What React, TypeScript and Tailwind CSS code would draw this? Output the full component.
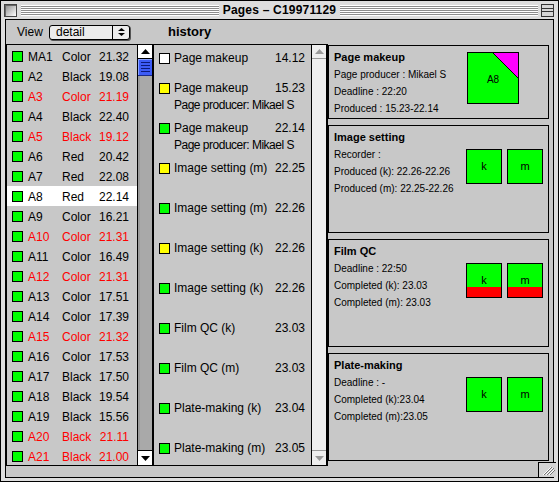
import React from "react";

type Page = { name: string; kind: string; time: string; late?: boolean; selected?: boolean };

const pages: Page[] = [
  { name: "MA1", kind: "Color", time: "21.32" },
  { name: "A2", kind: "Black", time: "19.08" },
  { name: "A3", kind: "Color", time: "21.19", late: true },
  { name: "A4", kind: "Black", time: "22.40" },
  { name: "A5", kind: "Black", time: "19.12", late: true },
  { name: "A6", kind: "Red", time: "20.42" },
  { name: "A7", kind: "Red", time: "22.08" },
  { name: "A8", kind: "Red", time: "22.14", selected: true },
  { name: "A9", kind: "Color", time: "16.21" },
  { name: "A10", kind: "Color", time: "21.31", late: true },
  { name: "A11", kind: "Color", time: "16.49" },
  { name: "A12", kind: "Color", time: "21.31", late: true },
  { name: "A13", kind: "Color", time: "17.51" },
  { name: "A14", kind: "Color", time: "17.39" },
  { name: "A15", kind: "Color", time: "21.32", late: true },
  { name: "A16", kind: "Color", time: "17.53" },
  { name: "A17", kind: "Black", time: "17.50" },
  { name: "A18", kind: "Black", time: "19.54" },
  { name: "A19", kind: "Black", time: "15.56" },
  { name: "A20", kind: "Black", time: "21.11", late: true },
  { name: "A21", kind: "Black", time: "21.00", late: true },
];

type Step = { status: "done" | "busy" | "new"; label: string; time: string; by?: string };

const history: Step[] = [
  { status: "new", label: "Page makeup", time: "14.12" },
  { status: "busy", label: "Page makeup", time: "15.23", by: "Page producer: Mikael S" },
  { status: "done", label: "Page makeup", time: "22.14", by: "Page producer: Mikael S" },
  { status: "busy", label: "Image setting (m)", time: "22.25" },
  { status: "done", label: "Image setting (m)", time: "22.26" },
  { status: "busy", label: "Image setting (k)", time: "22.26" },
  { status: "done", label: "Image setting (k)", time: "22.26" },
  { status: "done", label: "Film QC (k)", time: "23.03" },
  { status: "done", label: "Film QC (m)", time: "23.03" },
  { status: "done", label: "Plate-making (k)", time: "23.04" },
  { status: "done", label: "Plate-making (m)", time: "23.05" },
];

const statusColor = {
  done: "bg-[#00ff00]",
  busy: "bg-[#ffff00]",
  new: "bg-white",
};

function Arrow({ down, color = "#000" }: { down?: boolean; color?: string }) {
  return (
    <svg width="9" height="5" viewBox="0 0 9 5">
      <path d={down ? "M0 0 L9 0 L4.5 5Z" : "M4.5 0 L9 5 L0 5Z"} fill={color} />
    </svg>
  );
}

function TitleBar() {
  const stripes =
    "flex-1 h-[11px] bg-[repeating-linear-gradient(to_bottom,#ffffff_0px,#ffffff_1px,#8c8c8c_1px,#8c8c8c_2px)]";
  return (
    <div className="h-[18px] flex items-center pl-[3px] pr-[4px]">
      <div className="w-[13px] h-[13px] border border-[#444] bg-[linear-gradient(135deg,#8a8a8a,#ffffff)] shadow-[inset_1px_1px_0_#666]" />
      <div className={`${stripes} ml-[4px]`} />
      <div className="px-[4px] text-[12px] font-bold leading-none tracking-[0.2px]">Pages – C19971129</div>
      <div className={`${stripes} mr-[3px]`} />
      <div className="w-[13px] h-[13px] border border-[#333] bg-[#d6d6d6] flex flex-col">
        <div className="h-[4px] border-b border-[#333]" />
        <div className="h-[3px] border-b border-[#333]" />
      </div>
    </div>
  );
}

function Toolbar() {
  return (
    <div className="h-[24px] flex items-center pl-[11px]">
      <div className="w-[32px] text-[12px]">View</div>
      <div className="w-[81px] h-[15px] rounded-[3px] border border-black bg-[#ececec] shadow-[1px_1px_0_#555] flex">
        <div className="flex-1 pl-[6px] text-[12px] leading-[13px]">detail</div>
        <div className="w-[17px] border-l border-black flex flex-col items-center justify-center gap-[2px]">
          <svg width="7" height="3" viewBox="0 0 7 3"><path d="M3.5 0 L7 3 L0 3Z" fill="#000" /></svg>
          <svg width="7" height="3" viewBox="0 0 7 3"><path d="M0 0 L7 0 L3.5 3Z" fill="#000" /></svg>
        </div>
      </div>
      <div className="ml-[38px] text-[13px] font-bold">history</div>
    </div>
  );
}

function PageList() {
  return (
    <div className="w-[147px] h-full border border-black flex">
      <div className="w-[130px] pt-[1px] overflow-hidden text-[12px]">
        {pages.map((p) => (
          <div
            key={p.name}
            className={`h-[20px] flex items-center pl-[5px] pr-[8px] ${p.selected ? "bg-white" : ""} ${
              p.late ? "text-[#ff0000]" : "text-black"
            }`}
          >
            <div className="w-[11px] h-[11px] border border-black bg-[#00ff00]" />
            <div className="ml-[5px] w-[34px] pt-[1px]">{p.name}</div>
            <div className="w-[36px] pt-[1px]">{p.kind}</div>
            <div className="flex-1 text-right pt-[1px]">{p.time}</div>
          </div>
        ))}
      </div>
      <div className="w-[15px] border-l border-black bg-[#a9a9a9] flex flex-col">
        <div className="h-[14px] bg-white border-b border-black flex items-center justify-center">
          <Arrow />
        </div>
        <div className="h-[17px] bg-[#3d5cf7] border-b border-[#1a2a8a] shadow-[inset_1px_1px_0_#8aa2ff] flex flex-col items-center justify-center gap-[2px]">
          <div className="w-[9px] h-[1px] bg-[#0c1a7a]" />
          <div className="w-[9px] h-[1px] bg-[#0c1a7a]" />
          <div className="w-[9px] h-[1px] bg-[#0c1a7a]" />
          <div className="w-[9px] h-[1px] bg-[#0c1a7a]" />
        </div>
        <div className="flex-1 shadow-[inset_2px_0_0_#9a9a9a]" />
        <div className="h-[15px] bg-white border-t border-black flex items-center justify-center">
          <Arrow down />
        </div>
      </div>
    </div>
  );
}

function History() {
  return (
    <div className="w-[175px] h-full border-y border-l border-r-2 border-black flex">
      <div className="w-[157px] pt-[3px] overflow-hidden text-[12px]">
        {history.map((s, i) => (
          <div key={i} className={i === 0 ? "h-[30px]" : "h-[40px]"}>
            <div className="h-[20px] flex items-center pl-[5px] pr-[6px]">
              <div className={`w-[11px] h-[11px] border border-black ${statusColor[s.status]}`} />
              <div className="ml-[4px] flex-1">{s.label}</div>
              <div>{s.time}</div>
            </div>
            {s.by && <div className="h-[14px] leading-[14px] pl-[20px] tracking-[-0.5px]">{s.by}</div>}
          </div>
        ))}
      </div>
      <div className="w-[15px] border-l border-black bg-[#eeeeee] flex flex-col">
        <div className="h-[14px] border-b border-[#9a9a9a] flex items-center justify-center">
          <Arrow color="#9a9a9a" />
        </div>
        <div className="flex-1" />
        <div className="h-[15px] border-t border-[#9a9a9a] flex items-center justify-center">
          <Arrow down color="#9a9a9a" />
        </div>
      </div>
    </div>
  );
}

function InkBox({ label, qc }: { label: string; qc?: boolean }) {
  return (
    <div className="relative w-[36px] h-[35px] border border-black bg-[#00ff00] flex items-center justify-center text-[11px]">
      {qc && <div className="absolute left-0 right-0 bottom-0 h-[10px] bg-[#ff0000]" />}
      <span className="relative">{label}</span>
    </div>
  );
}

function Section({
  title,
  lines,
  h,
  children,
  boxPad,
}: {
  title: string;
  lines: string[];
  h: string;
  children: React.ReactNode;
  boxPad: string;
}) {
  return (
    <div className={`${h} border border-black flex`}>
      <div className="flex-1 pl-[5px] pt-[3px]">
        <div className="h-[17px] leading-[17px] text-[11px] font-bold">{title}</div>
        {lines.map((l) => (
          <div key={l} className="h-[17px] leading-[17px] text-[10px]">
            {l}
          </div>
        ))}
      </div>
      <div className={boxPad}>{children}</div>
    </div>
  );
}

function Details() {
  return (
    <div className="flex-1 pt-[1px] pr-[4px] flex flex-col gap-[6px]">
      <Section
        h="h-[74px]"
        title="Page makeup"
        lines={["Page producer : Mikael S", "Deadline : 22:20", "Produced : 15.23-22.14"]}
        boxPad="pt-[6px] pr-[29px]"
      >
        <div className="relative w-[52px] h-[52px] border border-black bg-[#00ff00] flex items-center justify-center text-[10px]">
          <svg className="absolute inset-0" width="50" height="50" viewBox="0 0 50 50">
            <path d="M25 0 L50 0 L50 25Z" fill="#ff00ff" />
            <path d="M25 0 L50 25" stroke="#000" strokeWidth="1" />
          </svg>
          <span className="relative mt-[3px]">A8</span>
        </div>
      </Section>
      <Section
        h="h-[108px]"
        title="Image setting"
        lines={["Recorder :", "Produced (k): 22.26-22.26", "Produced (m): 22.25-22.26"]}
        boxPad="pt-[23px] pr-[5px] flex gap-[5px] items-start"
      >
        <InkBox label="k" />
        <InkBox label="m" />
      </Section>
      <Section
        h="h-[108px]"
        title="Film QC"
        lines={["Deadline : 22:50", "Completed (k): 23.03", "Completed (m): 23.03"]}
        boxPad="pt-[23px] pr-[5px] flex gap-[5px] items-start"
      >
        <InkBox label="k" qc />
        <InkBox label="m" qc />
      </Section>
      <Section
        h="h-[108px]"
        title="Plate-making"
        lines={["Deadline : -", "Completed (k):23.04", "Completed (m):23.05"]}
        boxPad="pt-[23px] pr-[5px] flex gap-[5px] items-start"
      >
        <InkBox label="k" />
        <InkBox label="m" />
      </Section>
    </div>
  );
}

function GrowBox() {
  return (
    <div className="absolute right-[2px] bottom-[4px] w-[18px] h-[15px] border-l border-t border-black bg-[#d4d4d4]">
      <svg width="17" height="14" viewBox="0 0 17 14">
        <path d="M4 12 L12 4 M7 12 L14 5 M10 12 L15 7" stroke="#ffffff" strokeWidth="1" />
        <path d="M5 12 L13 4 M8 12 L15 5 M11 12 L16 7" stroke="#777777" strokeWidth="1" />
      </svg>
    </div>
  );
}

export default function App() {
  return (
    <div className="relative w-[559px] h-[482px] border border-black bg-[#dddddd] flex flex-col font-['Liberation_Sans',Arial,sans-serif] text-black">
      <TitleBar />
      <div className="mx-[4px] h-[459px] border border-black bg-[#c8c8c8] flex flex-col">
        <Toolbar />
        <div className="h-[422px] flex">
          <PageList />
          <History />
          <Details />
        </div>
        <div className="flex-1" />
      </div>
      <GrowBox />
    </div>
  );
}
